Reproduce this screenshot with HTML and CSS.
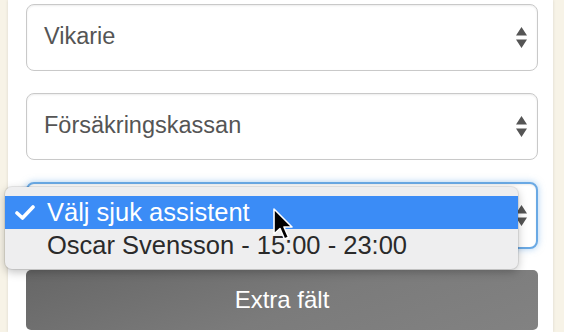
FILE: index.html
```html
<!DOCTYPE html>
<html lang="sv">
<head>
  <meta charset="UTF-8" />
  <meta name="viewport" content="width=device-width, initial-scale=1" />
  <title>Sjukanmälan</title>
  <link rel="stylesheet" href="styles.css">
</head>
<body>
<div class="page">
  <div class="panel">
    <!-- Roll -->
    <div class="form-group">
      <div class="form-select">
        <span class="select-text">Vikarie</span>
        <svg class="select-arrows" width="11" height="21" viewBox="0 0 11 21"><path d="M5.5 0 L11 8.5 L0 8.5 Z M0 12.5 L11 12.5 L5.5 21 Z" fill="#555"/></svg>
      </div>
    </div>

    <!-- Betalare -->
    <div class="form-group">
      <div class="form-select">
        <span class="select-text">Försäkringskassan</span>
        <svg class="select-arrows" width="11" height="21" viewBox="0 0 11 21"><path d="M5.5 0 L11 8.5 L0 8.5 Z M0 12.5 L11 12.5 L5.5 21 Z" fill="#555"/></svg>
      </div>
    </div>

    <!-- Sjuk assistent, öppen lista -->
    <div class="form-group">
      <div class="form-select is-focused">
        <span class="select-text is-covered">Välj sjuk assistent</span>
        <svg class="select-arrows" width="11" height="21" viewBox="0 0 11 21"><path d="M5.5 0 L11 8.5 L0 8.5 Z M0 12.5 L11 12.5 L5.5 21 Z" fill="#555"/></svg>
        <div class="select-menu">
          <div class="menu-item is-active">
            <svg class="menu-check" width="20" height="15" viewBox="0 0 20 15"><path d="M2 8 L7.5 13 L18 2" fill="none" stroke="#fff" stroke-width="3.6" stroke-linecap="round" stroke-linejoin="round"/></svg>
            Välj sjuk assistent
          </div>
          <div class="menu-item">Oscar Svensson - 15:00 - 23:00</div>
        </div>
        <svg class="cursor" width="22" height="34" viewBox="0 0 22 34"><path d="M1 1 L1 26 L7 20.5 L11.5 31 L15.5 29.3 L11 19 L19 19 Z" fill="#000" stroke="#fff" stroke-width="1.6" stroke-linejoin="round"/></svg>
      </div>
    </div>

    <button type="button" class="extra-btn">Extra fält</button>
  </div>
</div>
</body>
</html>
```

FILE: styles.css
```css
body, html {
  margin: 0;
  padding: 0;
  height: 100%;
  overflow: hidden;
  background: #f7f3e7;
  font-family: 'Liberation Sans', Arial, sans-serif;
  color: #555;
}
.page {
  display: flex;
  height: 100%;
  padding: 0 11px 0 8px;
}
.panel {
  flex: 1;
  background: #fff;
  padding: 4px 15px 0 18px;
  box-shadow: 0 0 3px rgba(0, 0, 0, 0.12);
}
.form-group {
  margin-bottom: 22px;
}
.form-select {
  position: relative;
  display: flex;
  align-items: center;
  justify-content: space-between;
  height: 67px;
  box-sizing: border-box;
  padding: 0 10px 0 17px;
  border: 1px solid #c9c9c9;
  border-radius: 8px;
  background: #fff;
  box-shadow: inset 0 1px 2px rgba(0, 0, 0, 0.08);
  font-size: 23.5px;
}
.select-text {
  padding-bottom: 2px;
}
.select-text.is-covered {
  visibility: hidden;
}
.form-select.is-focused {
  border: 2px solid #6aa9e4;
  box-shadow: 0 0 7px rgba(102, 168, 230, 0.55), inset 0 1px 2px rgba(0, 0, 0, 0.08);
  padding-right: 9px;
}
.select-menu {
  position: absolute;
  left: -23px;
  top: 3px;
  width: 513px;
  padding: 9px 0 7px;
  background: #eeeeef;
  border-radius: 7px;
  box-shadow: 0 3px 10px rgba(0, 0, 0, 0.25), 0 0 0 1px rgba(0, 0, 0, 0.08);
  font-size: 25.5px;
  color: #2a2a2a;
  z-index: 2;
}
.menu-item {
  position: relative;
  height: 33px;
  line-height: 33px;
  padding-left: 42px;
  white-space: nowrap;
}
.menu-item.is-active {
  background: #3b8cf6;
  color: #fff;
}
.menu-check {
  position: absolute;
  left: 10px;
  top: 9px;
}
.cursor {
  position: absolute;
  left: 245px;
  top: 24px;
  z-index: 3;
}
.extra-btn {
  display: block;
  width: 100%;
  height: 60px;
  border: none;
  border-radius: 5px;
  background: linear-gradient(160deg, #666 0%, #7b7b7b 55%, #828282 100%);
  color: #fff;
  font-family: 'Liberation Sans', Arial, sans-serif;
  font-size: 24px;
  margin-top: -1px;
  cursor: pointer;
}
```
